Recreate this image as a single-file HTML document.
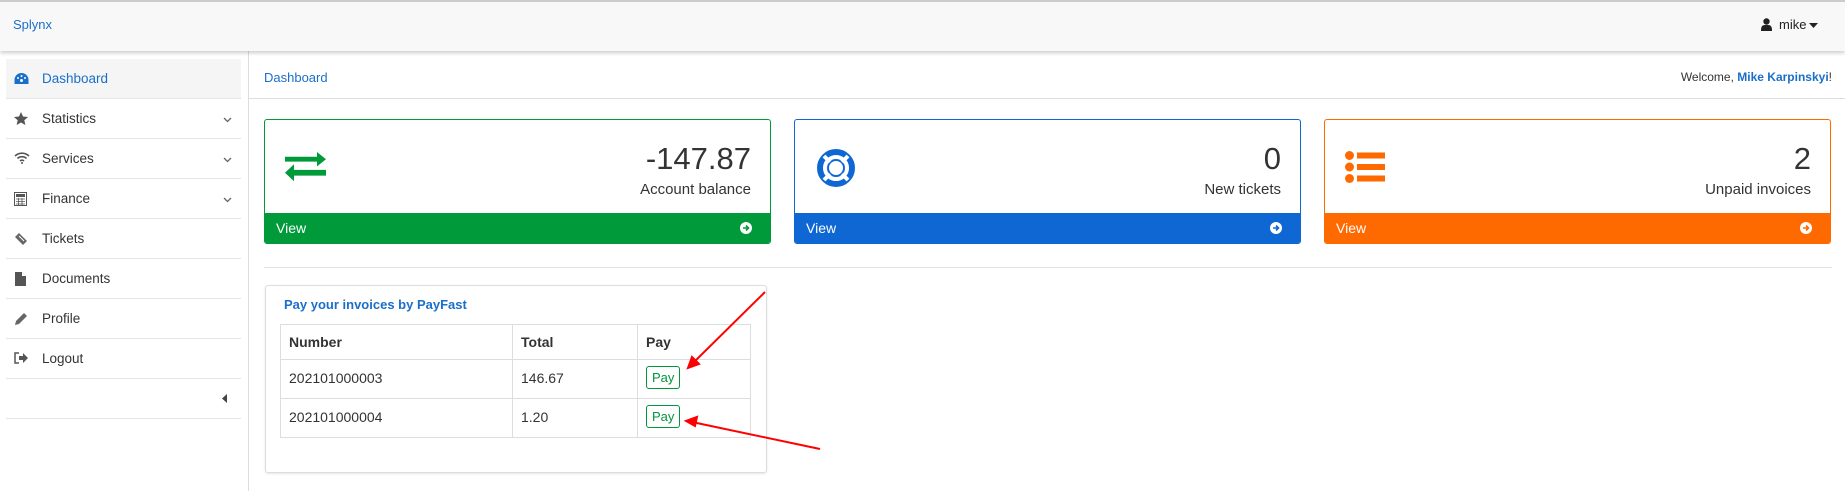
<!DOCTYPE html>
<html><head><meta charset="utf-8"><style>
*{box-sizing:border-box;margin:0;padding:0}
body{width:1845px;height:491px;overflow:hidden;background:#fff;font-family:"Liberation Sans",sans-serif;font-size:14px;color:#333;position:relative}
.nav{position:absolute;left:0;top:0;width:1845px;height:51px;background:#f8f8f8;border-top:2px solid #ccc;box-shadow:0 2px 4px rgba(0,0,0,.2);z-index:2}
.abs{position:absolute}
.side{position:absolute;left:6px;top:59px;width:235px}
.item{height:40px;border-bottom:1px solid #e5e5e5;display:flex;align-items:center;padding-left:36px;position:relative;font-size:13.5px}
.item svg{position:absolute;left:8px;top:13px}
.item .chev{position:absolute;left:217px;top:18px}
.vline{position:absolute;left:248px;top:51px;width:1px;height:440px;background:#ddd}
.card{position:absolute;top:119px;width:507px;height:125px;border:1px solid;border-radius:3px;overflow:hidden;background:#fff}
.card .num{position:absolute;right:19px;top:21px;font-size:31px;color:#333}
.card .lbl{position:absolute;right:19px;top:61px;font-size:15px;color:#333}
.card .foot{position:absolute;left:0;bottom:0;width:100%;height:30px;color:#fff;padding:7px 11px;font-size:14px}
.card .foot svg{position:absolute;right:18px;top:9px}
table{border-collapse:collapse;position:absolute;left:280px;top:324px;width:471px}
td,th{border:1px solid #ddd;text-align:left;padding:0 8px;font-size:14px}
th{height:35px}
td{height:39px;padding-bottom:3px}
.pay{display:inline-block;border:1px solid #00963a;color:#00963a;border-radius:3px;padding:3px 5px;font-size:13px}
</style></head><body>
<div class="nav">
<div class="abs" style="left:13px;top:15px;color:#1a6fc9;font-size:13px">Splynx</div>
<svg class="abs" style="left:1761px;top:16px" width="11" height="13" viewBox="0 0 11 13"><circle cx="5.5" cy="3.5" r="3.2" fill="#222"/><path d="M0 13 C0 7 2 7 5.5 7 C9 7 11 7 11 13Z" fill="#222"/></svg>
<div class="abs" style="left:1779px;top:15px;font-size:13px;color:#222">mike</div>
<svg class="abs" style="left:1809px;top:21px" width="9" height="5"><path d="M0 0H9L4.5 5Z" fill="#222"/></svg>
</div>
<div class="vline"></div>
<div class="side">
<div class="item" style="background:#f5f5f5;color:#1a6fc9"><svg width="15" height="13" viewBox="0 0 15 13"><path d="M7.5 1A7 7 0 0 0 .5 8v4h14V8A7 7 0 0 0 7.5 1z" fill="#1a6fc9"/><circle cx="7.5" cy="8.5" r="1.5" fill="#fff"/><circle cx="4" cy="6" r="1" fill="#fff"/><circle cx="7.5" cy="4" r="1" fill="#fff"/><circle cx="11" cy="6" r="1" fill="#fff"/></svg>Dashboard</div>
<div class="item"><svg width="14" height="13" viewBox="0 0 14 13"><path d="M7 0l2 4.5 5 .5-3.7 3.3 1.1 4.7L7 10.5 2.6 13l1.1-4.7L0 5l5-.5z" fill="#555"/></svg>Statistics<svg class="chev" width="9" height="6"><path d="M1 1l3.5 3.5L8 1" stroke="#666" fill="none" stroke-width="1.3"/></svg></div>
<div class="item"><svg width="16" height="12" viewBox="0 0 16 12"><path d="M1 4a10 10 0 0 1 14 0M3.5 6.5a6.5 6.5 0 0 1 9 0M6 9a3 3 0 0 1 4 0" stroke="#555" stroke-width="1.6" fill="none"/><circle cx="8" cy="11" r="1" fill="#555"/></svg>Services<svg class="chev" width="9" height="6"><path d="M1 1l3.5 3.5L8 1" stroke="#666" fill="none" stroke-width="1.3"/></svg></div>
<div class="item"><svg width="13" height="14" viewBox="0 0 13 14"><rect x=".5" y=".5" width="12" height="13" fill="none" stroke="#555"/><rect x="2" y="2" width="9" height="3" fill="#555"/><path d="M2 7h9M2 9.5h9M2 12h9M4.5 6v7M8 6v7" stroke="#555" stroke-width=".8"/></svg>Finance<svg class="chev" width="9" height="6"><path d="M1 1l3.5 3.5L8 1" stroke="#666" fill="none" stroke-width="1.3"/></svg></div>
<div class="item"><svg width="14" height="13" viewBox="0 0 14 13"><path d="M5 1l8 8-4 4-8-8z" fill="#666"/><path d="M5 4l5 5" stroke="#fff"/></svg>Tickets</div>
<div class="item"><svg width="13" height="14" viewBox="0 0 13 14"><path d="M1 0h7l4 4v10H1z" fill="#555"/><path d="M8 0v4h4" fill="#fff"/></svg>Documents</div>
<div class="item"><svg width="14" height="14" viewBox="0 0 14 14"><path d="M10 1l3 3-8 8-4 1 1-4z" fill="#666"/></svg>Profile</div>
<div class="item"><svg width="14" height="12" viewBox="0 0 14 12"><path d="M5 1H1v10h4" stroke="#555" fill="none" stroke-width="1.5"/><path d="M5 4h4V1l5 5-5 5V8H5z" fill="#555"/></svg>Logout</div>
<div class="item"><svg style="left:216px;top:15px" width="5" height="9"><path d="M5 0V9L0 4.5Z" fill="#444"/></svg></div>
</div>
<div class="abs" style="left:249px;top:98px;width:1596px;height:1px;background:#ddd"></div>
<div class="abs" style="left:264px;top:70px;color:#1a6fc9;font-size:13px">Dashboard</div>
<div class="abs" style="right:13px;top:70px;font-size:12px;color:#333">Welcome, <b style="color:#1a6fc9">Mike Karpinskyi</b>!</div>

<div class="card" style="left:264px;border-color:#009a3a">
<svg class="abs" style="left:20px;top:32px" width="41" height="30" viewBox="0 0 41 30"><path d="M0 6h32V0l9 9-9 9v-6H0z" fill="#009a3a" transform="scale(1,.8)"/><path d="M41 22H9v-6l-9 9 9 9v-6h32z" fill="#009a3a" transform="translate(0,-3) scale(1,.95)"/></svg>
<div class="num">-147.87</div><div class="lbl">Account balance</div>
<div class="foot" style="background:#009a3a">View<svg width="12" height="12" viewBox="0 0 12 12"><circle cx="6" cy="6" r="6" fill="#fff"/><path d="M3 6h5M6 3.5 8.5 6 6 8.5" stroke="#009a3a" stroke-width="1.6" fill="none"/></svg></div></div>

<div class="card" style="left:794px;border-color:#0f67d4">
<svg class="abs" style="left:21px;top:28px" width="40" height="40" viewBox="0 0 40 40"><circle cx="20" cy="20" r="16" fill="none" stroke="#0f67d4" stroke-width="6"/><circle cx="20" cy="20" r="8" fill="none" stroke="#0f67d4" stroke-width="2"/><path d="M8 8l6 6M32 8l-6 6M8 32l6-6M32 32l-6-6" stroke="#fff" stroke-width="4"/></svg>
<div class="num">0</div><div class="lbl">New tickets</div>
<div class="foot" style="background:#0f67d4">View<svg width="12" height="12" viewBox="0 0 12 12"><circle cx="6" cy="6" r="6" fill="#fff"/><path d="M3 6h5M6 3.5 8.5 6 6 8.5" stroke="#0f67d4" stroke-width="1.6" fill="none"/></svg></div></div>

<div class="card" style="left:1324px;border-color:#ff6a00">
<svg class="abs" style="left:20px;top:31px" width="40" height="32" viewBox="0 0 40 32"><circle cx="4.5" cy="4.5" r="4.5" fill="#ff6a00"/><circle cx="4.5" cy="16" r="4.5" fill="#ff6a00"/><circle cx="4.5" cy="27.5" r="4.5" fill="#ff6a00"/><rect x="12" y="1.5" width="28" height="6" fill="#ff6a00"/><rect x="12" y="13" width="28" height="6" fill="#ff6a00"/><rect x="12" y="24.5" width="28" height="6" fill="#ff6a00"/></svg>
<div class="num">2</div><div class="lbl">Unpaid invoices</div>
<div class="foot" style="background:#ff6a00">View<svg width="12" height="12" viewBox="0 0 12 12"><circle cx="6" cy="6" r="6" fill="#fff"/><path d="M3 6h5M6 3.5 8.5 6 6 8.5" stroke="#ff6a00" stroke-width="1.6" fill="none"/></svg></div></div>

<div class="abs" style="left:264px;top:267px;width:1568px;height:1px;background:#e3e3e3"></div>
<div class="abs" style="left:265px;top:285px;width:502px;height:188px;border:1px solid #ddd;border-radius:3px;box-shadow:0 1px 2px rgba(0,0,0,.1)"></div>
<div class="abs" style="left:284px;top:297px;color:#1a6fc9;font-weight:bold;font-size:13px">Pay your invoices by PayFast</div>
<table><tr><th style="width:232px">Number</th><th style="width:125px">Total</th><th>Pay</th></tr>
<tr><td>202101000003</td><td>146.67</td><td><span class="pay">Pay</span></td></tr>
<tr><td>202101000004</td><td>1.20</td><td><span class="pay">Pay</span></td></tr></table>
<svg class="abs" style="left:0;top:0" width="1845" height="491"><g stroke="#f00" stroke-width="2" fill="#f00"><line x1="765" y1="292" x2="692" y2="364"/><path d="M688 368l4-11 7 7z"/><line x1="820" y1="449" x2="692" y2="422"/><path d="M686 421l11-4-2 9z"/></g></svg>
</body></html>
